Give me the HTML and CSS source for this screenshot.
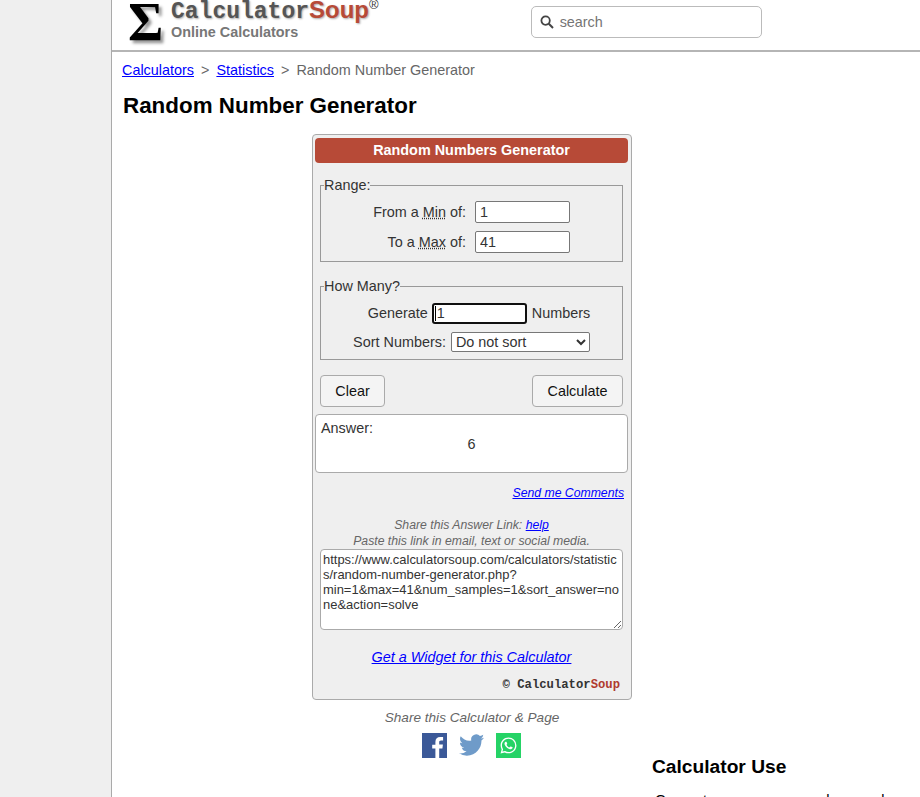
FILE: index.html
```html
<!DOCTYPE html>
<html lang="en">
<head>
    <meta charset="UTF-8">
    <meta name="viewport" content="width=device-width, initial-scale=1.0">
    <title>Random Number Generator</title>
    <link rel="stylesheet" href="styles.css">
</head>
<body>
    <div class="side"></div>
    <div class="page">
        <header class="top">
            <a class="logo" href="#">
                <span class="sigma">&Sigma;</span>
                <span class="logo-text">
                    <span class="brand">Calculator<b>Soup</b><sup>&reg;</sup></span>
                    <span class="tagline">Online Calculators</span>
                </span>
            </a>
            <div class="search">
                <svg width="14" height="14" viewBox="0 0 14 14"><circle cx="5.6" cy="5.6" r="4.2" fill="none" stroke="#444" stroke-width="1.8"/><path d="M8.8 8.8L13 13" stroke="#444" stroke-width="2"/></svg>
                <span>search</span>
            </div>
        </header>

        <nav class="crumbs">
            <a href="#">Calculators</a><span class="sep">&gt;</span><a href="#">Statistics</a><span class="sep">&gt;</span><span>Random Number Generator</span>
        </nav>

        <h1>Random Number Generator</h1>

        <form class="calc">
            <h2>Random Numbers Generator</h2>

            <fieldset class="range">
                <legend>Range:</legend>
                <div class="row">
                    <label>From a <abbr title="Minimum">Min</abbr> of:</label>
                    <input type="text" value="1">
                </div>
                <div class="row">
                    <label>To a <abbr title="Maximum">Max</abbr> of:</label>
                    <input type="text" value="41">
                </div>
            </fieldset>

            <fieldset class="many">
                <legend>How Many?</legend>
                <div class="row-center first">
                    <label>Generate</label>
                    <span class="focused"><input type="text" value="1"></span>
                    <span>Numbers</span>
                </div>
                <div class="row-center">
                    <label>Sort Numbers:</label>
                    <select>
                        <option>Do not sort</option>
                        <option>Low to High</option>
                        <option>High to Low</option>
                    </select>
                </div>
            </fieldset>

            <div class="buttons">
                <button type="button" class="clear">Clear</button>
                <button type="button" class="solve">Calculate</button>
            </div>

            <div class="answer">
                <div>Answer:</div>
                <div class="value">6</div>
            </div>

            <p class="comments"><a href="#">Send me Comments</a></p>

            <p class="share-note">Share this Answer Link: <a href="#">help</a><br>Paste this link in email, text or social media.</p>
            <textarea class="share-link" spellcheck="false">https://www.calculatorsoup.com/calculators/statistics/random-number-generator.php?min=1&amp;max=41&amp;num_samples=1&amp;sort_answer=none&amp;action=solve</textarea>

            <p class="widget"><a href="#">Get a Widget for this Calculator</a></p>
            <p class="credit">&copy; Calculator<b>Soup</b></p>
        </form>

        <p class="share-title">Share this Calculator &amp; Page</p>
        <div class="share-icons">
            <svg width="25" height="25" viewBox="0 0 25 25"><rect width="25" height="25" fill="#3b5998"/><path d="M17.2 25v-9.6h3.2l.5-3.8h-3.7V9.3c0-1.1.3-1.8 1.9-1.8h2V4.100c-.4 0-1.500-.1-2.900-.1-2.900 0-4.800 1.800-4.800 5v2.700h-3.200v3.800h3.200V25z" fill="#fff"/></svg>
            <svg width="25" height="25" viewBox="0 0 24 24"><path fill="#6f9bc9" d="M23.953 4.570a10 10 0 01-2.825.775 4.958 4.958 0 002.163-3.723c-.951.555-2.005.959-3.127 1.184a4.920 4.920 0 00-8.384 4.482C7.690 8.095 4.067 6.130 1.640 3.162a4.822 4.822 0 00-.666 2.475c0 1.710.870 3.213 2.188 4.096a4.904 4.904 0 01-2.228-.616v.060a4.923 4.923 0 003.946 4.827 4.996 4.996 0 01-2.212.085 4.936 4.936 0 004.604 3.417 9.867 9.867 0 01-6.102 2.105c-.390 0-.779-.023-1.170-.067a13.995 13.995 0 007.557 2.209c9.053 0 13.998-7.496 13.998-13.985 0-.210 0-.420-.015-.630A9.935 9.935 0 0024 4.590z"/></svg>
            <svg width="25" height="25" viewBox="0 0 25 25"><rect width="25" height="25" fill="#25d366"/><g transform="translate(4.500 4.500) scale(.667)"><path fill="#fff" d="M17.472 14.382c-.297-.149-1.758-.867-2.030-.967-.273-.099-.471-.148-.670.150-.197.297-.767.966-.940 1.164-.173.199-.347.223-.644.075-.297-.150-1.255-.463-2.390-1.475-.883-.788-1.480-1.761-1.653-2.059-.173-.297-.018-.458.130-.606.134-.133.298-.347.446-.520.149-.174.198-.298.298-.497.099-.198.050-.371-.025-.520-.075-.149-.669-1.612-.916-2.207-.242-.579-.487-.500-.669-.510-.173-.008-.371-.010-.570-.010-.198 0-.520.074-.792.372-.272.297-1.040 1.016-1.040 2.479 0 1.462 1.065 2.875 1.213 3.074.149.198 2.096 3.200 5.077 4.487.709.306 1.262.489 1.694.625.712.227 1.360.195 1.871.118.571-.085 1.758-.719 2.006-1.413.248-.694.248-1.289.173-1.413-.074-.124-.272-.198-.570-.347m-5.421 7.403h-.004a9.870 9.870 0 01-5.031-1.378l-.361-.214-3.741.982.998-3.648-.235-.374a9.860 9.860 0 01-1.510-5.260c.001-5.450 4.436-9.884 9.888-9.884 2.640 0 5.122 1.030 6.988 2.898a9.825 9.825 0 012.893 6.994c-.003 5.450-4.437 9.884-9.885 9.884m8.413-18.297A11.815 11.815 0 0012.050 0C5.495 0 .160 5.335.157 11.892c0 2.096.547 4.142 1.588 5.945L.057 24l6.305-1.654a11.882 11.882 0 005.683 1.448h.005c6.554 0 11.890-5.335 11.893-11.893a11.821 11.821 0 00-3.480-8.413z"/></g></svg>
        </div>

        <section class="use">
            <h3>Calculator Use</h3>
            <p>Generate one or more random numbers</p>
        </section>
    </div>
</body>
</html>
```

FILE: styles.css
```css
html, body {
    height: 100%;
    overflow: hidden;
}

body {
    margin: 0;
    display: flex;
    font-family: "Liberation Sans", Arial, sans-serif;
    font-size: 14.4px;
    color: #333;
    background: #fff;
}

.side {
    width: 111px;
    flex-shrink: 0;
    background: #efefef;
    border-right: 1px solid #aaa;
}

.page {
    width: 720px;
    flex-shrink: 0;
}

/* header */
.top {
    display: flex;
    width: 808px;
    height: 50px;
    border-bottom: 2px solid #b5b5b5;
}

.logo {
    display: flex;
    margin-left: 16px;
    text-decoration: none;
    height: 50px;
}

.sigma {
    font-family: "Liberation Serif", serif;
    font-weight: bold;
    font-size: 54px;
    line-height: 44px;
    color: #000;
    text-shadow: 3px 3px 3px #999;
    width: 43px;
}

.logo-text {
    display: flex;
    flex-direction: column;
}

.brand {
    font-family: "Liberation Mono", monospace;
    font-weight: bold;
    font-size: 23px;
    line-height: 20px;
    color: #555;
    text-shadow: 1px 1px 2px #aaa;
}

.brand b {
    font-family: "Liberation Sans", sans-serif;
    font-size: 24px;
    color: #b74a37;
}

.brand sup {
    font-family: "Liberation Sans", sans-serif;
    font-weight: normal;
    font-size: 13px;
    line-height: 0;
    color: #333;
    text-shadow: none;
}

.tagline {
    font-weight: bold;
    font-size: 14.4px;
    line-height: 18px;
    margin-top: 1px;
    color: #777;
}

.search {
    margin: 6px 0 0 152px;
    width: 231px;
    height: 32px;
    border: 1px solid #bbb;
    border-radius: 5px;
    display: flex;
    align-items: center;
    gap: 6px;
    padding-left: 8px;
    box-sizing: border-box;
    color: #757575;
}

/* breadcrumbs */
.crumbs {
    padding: 10px 0 0 10px;
    line-height: 17px;
    color: #666;
}

.sep {
    margin: 0 7px;
}

a {
    color: #00f;
}

h1 {
    margin: 13px 0 14px 11px;
    font-size: 22.4px;
    line-height: 28px;
    color: #000;
}

/* calculator */
.calc {
    width: 320px;
    margin: 0 auto;
    padding: 3px 3px 7px 2px;
    box-sizing: border-box;
    background: #efefef;
    border: 1px solid #aaa;
    border-radius: 4px;
}

.calc h2 {
    margin: 0;
    height: 25px;
    line-height: 25px;
    font-size: 14.4px;
    text-align: center;
    color: #fff;
    background: #b74a37;
    border-radius: 4px;
}

fieldset {
    margin: 14px 5px 0;
    padding: 0;
    border: 1px solid #999;
}

legend {
    padding: 0;
    margin-left: 3px;
    line-height: 17px;
}

input, select, textarea {
    font-family: "Liberation Sans", Arial, sans-serif;
    font-size: 14.4px;
    color: #333;
    box-sizing: border-box;
    background: #fff;
}

input {
    height: 22px;
    border: 1px solid #777;
    border-radius: 2px;
    padding: 0 4px;
}

abbr {
    text-decoration: underline dotted;
}

.range {
    height: 85px;
    padding-top: 7px;
    box-sizing: border-box;
}

.row {
    display: grid;
    grid-template-columns: 145px 95px;
    column-gap: 9px;
    align-items: center;
    height: 22px;
    margin-bottom: 8px;
}

.row label {
    text-align: right;
}

.row input {
    width: 95px;
}

.many {
    height: 82px;
    margin-top: 16px;
    padding-top: 8px;
    box-sizing: border-box;
}

.row-center {
    display: flex;
    align-items: center;
    justify-content: center;
    gap: 5px;
    height: 20px;
    margin-bottom: 9px;
}

.row-center.first {
    padding-left: 15px;
}

.focused {
    position: relative;
    display: flex;
    margin-left: -1px;
}

/* caret of the focused field */
.focused::after {
    content: "";
    position: absolute;
    left: 3px;
    top: 3px;
    width: 1px;
    height: 15px;
    background: #000;
}

.focused input {
    width: 95px;
    height: 21px;
    border: 2px solid #101010;
    border-radius: 3px;
    padding: 0 3px;
}

.row-center select {
    width: 139px;
    height: 20px;
    border: 1px solid #777;
    border-radius: 2px;
}

.buttons {
    display: flex;
    justify-content: space-between;
    margin: 15px 5px 0;
}

button {
    height: 32px;
    font-family: "Liberation Sans", Arial, sans-serif;
    font-size: 14.4px;
    color: #111;
    background: #f4f4f4;
    border: 1px solid #aaa;
    border-radius: 4px;
}

.clear {
    width: 65px;
}

.solve {
    width: 91px;
}

.answer {
    height: 59px;
    margin-top: 7px;
    padding: 5px;
    box-sizing: border-box;
    background: #fff;
    border: 1px solid #aaa;
    border-radius: 4px;
    line-height: 16px;
}

.value {
    text-align: center;
}

.comments {
    margin: 13px 4px 0 0;
    font-size: 12.24px;
    font-style: italic;
    line-height: 14px;
    text-align: right;
}

.share-note {
    margin: 17px 0 0;
    font-size: 12.24px;
    font-style: italic;
    line-height: 16px;
    text-align: center;
    color: #666;
}

.share-link {
    display: block;
    width: 303px;
    height: 81px;
    margin: 0 5px;
    padding: 2px;
    font-size: 12.96px;
    line-height: 15px;
    border: 1px solid #aaa;
    border-radius: 4px;
}

.widget {
    margin: 19px 0 0;
    font-style: italic;
    line-height: 16px;
    text-align: center;
}

.credit {
    margin: 13px 8px 0 0;
    font-family: "Liberation Mono", monospace;
    font-size: 12.24px;
    font-weight: bold;
    line-height: 14px;
    text-align: right;
}

.credit b {
    color: #b03a2e;
}

/* below calculator */
.share-title {
    margin: 10px 0 0;
    font-size: 13.6px;
    font-style: italic;
    line-height: 16px;
    text-align: center;
    color: #666;
}

.share-icons {
    display: flex;
    justify-content: center;
    gap: 12px;
    margin-top: 7px;
    padding-right: 2px;
    height: 25px;
}

.use {
    margin-left: 540px;
    width: 268px;
}

.use h3 {
    margin: -2px 0 0;
    font-size: 19.2px;
    line-height: 22px;
    color: #000;
}

.use p {
    margin: 14px 0 0 3px;
    line-height: 17px;
    color: #000;
}
```
